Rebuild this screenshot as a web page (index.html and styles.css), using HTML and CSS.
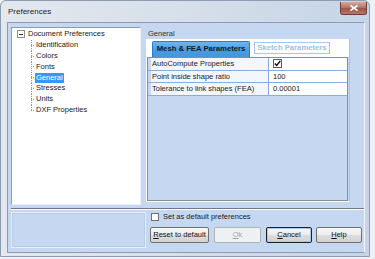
FILE: index.html
```html
<!DOCTYPE html>
<html>
<head>
<meta charset="utf-8">
<title>Preferences</title>
<link rel="stylesheet" href="styles.css">
</head>
<body>
<div class="window">
  <div class="titlebar">
    <span class="title">Preferences</span>
    <div class="close"><svg width="8" height="6" viewBox="0 0 8 6"><path d="M0.5 0.5 L7.5 5.5 M7.5 0.5 L0.5 5.5" stroke="#ffffff" stroke-width="1.6" fill="none"/></svg></div>
  </div>
  <div class="client">
    <div class="main">
      <div class="tree">
        <ul class="tree-root">
          <li>
            <div class="node-row"><span class="expander"><span class="minus"></span></span><span>Document Preferences</span></div>
            <ul class="children">
              <li>Identification</li>
              <li>Colors</li>
              <li>Fonts</li>
              <li><span class="selected">General</span></li>
              <li>Stresses</li>
              <li>Units</li>
              <li>DXF Properties</li>
            </ul>
          </li>
        </ul>
      </div>
      <div class="panel">
        <div class="panel-title">General</div>
        <div class="pane">
          <div class="tabs">
            <div class="tab tab-active">Mesh &amp; FEA Parameters</div>
            <div class="tab tab-inactive">Sketch Parameters</div>
          </div>
          <div class="grid">
            <div class="row">
              <div class="margin"></div>
              <div class="key">AutoCompute Properties</div>
              <div class="val"><span class="cell-check"><svg width="7" height="7" viewBox="0 0 7 7"><path d="M0.8 3.4 L2.7 5.4 L6.3 0.9" stroke="#111" stroke-width="1.5" fill="none"/></svg></span></div>
            </div>
            <div class="row">
              <div class="margin"></div>
              <div class="key">Point inside shape ratio</div>
              <div class="val">100</div>
            </div>
            <div class="row">
              <div class="margin"></div>
              <div class="key">Tolerance to link shapes (FEA)</div>
              <div class="val">0.00001</div>
            </div>
          </div>
        </div>
      </div>
    </div>
    <div class="sep"></div>
    <div class="bottom">
      <div class="status"></div>
      <div class="actions">
        <div class="chk-row"><span class="chk"></span><span>Set as default preferences</span></div>
        <div class="buttons">
          <div class="btn btn-reset"><u>R</u>eset to default</div>
          <div class="btn btn-ok disabled"><u>O</u>k</div>
          <div class="btn btn-cancel default"><u>C</u>ancel</div>
          <div class="btn btn-help"><u>H</u>elp</div>
        </div>
      </div>
    </div>
  </div>
</div>
</body>
</html>
```

FILE: styles.css
```css
* { box-sizing: border-box; margin: 0; padding: 0; }
html, body { width: 375px; height: 259px; overflow: hidden; }
body {
  background: #eef1f5;
  font-family: "Liberation Sans", Arial, sans-serif;
  font-size: 7.5px;
  color: #1a1a1a;
}
ul { list-style: none; }

.window {
  width: 370px;
  height: 257px;
  border: 1px solid #8d9cb0;
  border-radius: 6px 6px 0 0;
  background: linear-gradient(to right, #e3e8ef, #d3dde9 60%, #c5d4e8);
  padding: 0 4px 3px 6px;
  display: flex;
  flex-direction: column;
}

.titlebar {
  height: 21px;
  flex: none;
  display: flex;
  justify-content: space-between;
  align-items: flex-start;
}
.title {
  padding-left: 1px;
  font-size: 8px;
  line-height: 21px;
  color: #1b1b1b;
}
.close {
  width: 27px;
  height: 13px;
  margin-top: 1px;
  margin-right: -2px;
  border: 1px solid #6e3e34;
  border-top: none;
  border-radius: 0 0 3px 3px;
  background: linear-gradient(#d9aa9f, #b87565 45%, #9c5647 55%, #b7786a);
  display: flex;
  align-items: center;
  justify-content: center;
}

.client {
  flex: 1;
  border: 1px solid #8e9bad;
  border-right-color: #f3f7fd;
  background: #c6d7f1;
  padding: 4px 0 0 3px;
  display: flex;
  flex-direction: column;
}

.main {
  display: flex;
  height: 178px;
  gap: 2px;
  flex: none;
}

.tree {
  width: 130px;
  height: 178px;
  background: #ffffff;
  border: 1px solid;
  border-color: #8f9cae #eaf0f9 #eaf0f9 #8f9cae;
  padding: 1px 0 0 5px;
  line-height: 10.85px;
}
.node-row {
  display: flex;
  align-items: center;
  height: 10.85px;
  gap: 3px;
}
.expander {
  width: 8px;
  height: 8px;
  border: 1px solid #8e8e8e;
  background: #fff;
  display: flex;
  align-items: center;
  justify-content: center;
}
.minus {
  width: 4px;
  height: 1px;
  background: #333;
}
.children {
  margin-left: 14px;
}
.children li {
  height: 10.85px;
  padding-left: 5px;
  display: flex;
  align-items: center;
  background-image:
    repeating-linear-gradient(to bottom, #9a9a9a 0 1px, transparent 1px 2px),
    repeating-linear-gradient(to right, #9a9a9a 0 1px, transparent 1px 2px);
  background-size: 1px 100%, 4px 1px;
  background-position: 0 0, 0 50%;
  background-repeat: no-repeat;
}
.children li:last-child {
  background-size: 1px 50%, 4px 1px;
}
.selected {
  background: #3399ff;
  color: #ffffff;
  height: 10px;
  line-height: 10px;
  padding: 0 1px;
  margin-left: -1px;
}

.panel {
  width: 209px;
  padding-left: 3px;
  display: flex;
  flex-direction: column;
}
.panel-title {
  height: 12px;
  line-height: 13px;
  padding-left: 2px;
  color: #333;
}
.pane {
  width: 204px;
  border-left: 1px solid #ffffff;
  border-right: 1px solid #a3c3ea;
  border-bottom: 1px solid #ffffff;
}
.tabs {
  height: 18px;
  background: #ffffff;
  display: flex;
  align-items: flex-start;
  gap: 4px;
  padding: 2px 0 0 5px;
}
.tab {
  font-weight: bold;
  font-size: 7.7px;
  text-align: center;
  white-space: nowrap;
}
.tab-active {
  width: 98px;
  height: 16px;
  line-height: 13px;
  border: 1px solid #2f7bc4;
  border-bottom: none;
  border-radius: 2px 2px 0 0;
  background: linear-gradient(#6db5ee, #4b9ade 60%, #4795db);
  color: #101b27;
}
.tab-inactive {
  width: 76px;
  height: 12px;
  margin-top: 1px;
  line-height: 10px;
  border: 1px solid #a6c5ec;
  color: #9dbfea;
  background: #ffffff;
}

.grid {
  width: 201px;
  height: 144px;
  border: 1px solid #878e99;
  background: #c6d7f1;
}
.row {
  display: flex;
  height: 12.5px;
  border-bottom: 1px solid #88acdc;
}
.margin {
  width: 3px;
  flex: none;
}
.key {
  width: 118px;
  flex: none;
  background: #f3f6fc;
  border-right: 1px solid #88acdc;
  padding-left: 1px;
  line-height: 11.5px;
  white-space: nowrap;
}
.val {
  flex: 1;
  background: #ffffff;
  padding-left: 4px;
  line-height: 11.5px;
  display: flex;
  align-items: center;
}
.cell-check {
  width: 9px;
  height: 9px;
  border: 1px solid #5d5d5d;
  background: #fff;
  display: flex;
  align-items: center;
  justify-content: center;
}

.sep {
  height: 2px;
  margin-top: 3px;
  border-top: 1px solid #6c798c;
  border-bottom: 1px solid #ffffff;
  flex: none;
}

.bottom {
  display: flex;
  margin-top: 2px;
  height: 36px;
}
.status {
  width: 135px;
  height: 36px;
  border: 1px solid #e6eef9;
  box-shadow: inset 0 0 0 1px #b9cce6;
}
.actions {
  padding-left: 4px;
  display: flex;
  flex-direction: column;
}
.chk-row {
  height: 9px;
  display: flex;
  align-items: center;
  gap: 4px;
  padding-left: 1px;
}
.chk {
  width: 8px;
  height: 8px;
  border: 1px solid #707070;
  background: #ffffff;
}
.buttons {
  margin-top: 6px;
  display: flex;
  gap: 5px;
}
.btn {
  height: 16px;
  line-height: 14px;
  text-align: center;
  border: 1px solid #707070;
  border-radius: 2px;
  background: linear-gradient(#f7f7f7, #ececec 48%, #dcdcdc 52%, #d2d2d2);
  color: #111;
  white-space: nowrap;
}
.btn-reset { width: 59px; }
.btn-ok { width: 47px; }
.btn-cancel { width: 46px; }
.btn-help { width: 46px; margin-left: -1px; }
.btn.disabled {
  border-color: #aeb3b8;
  background: #eef1f4;
  color: #a4a4a4;
}
.btn.default {
  border-color: #222;
  box-shadow: inset 0 0 0 1px #a9c6e8;
}
```
